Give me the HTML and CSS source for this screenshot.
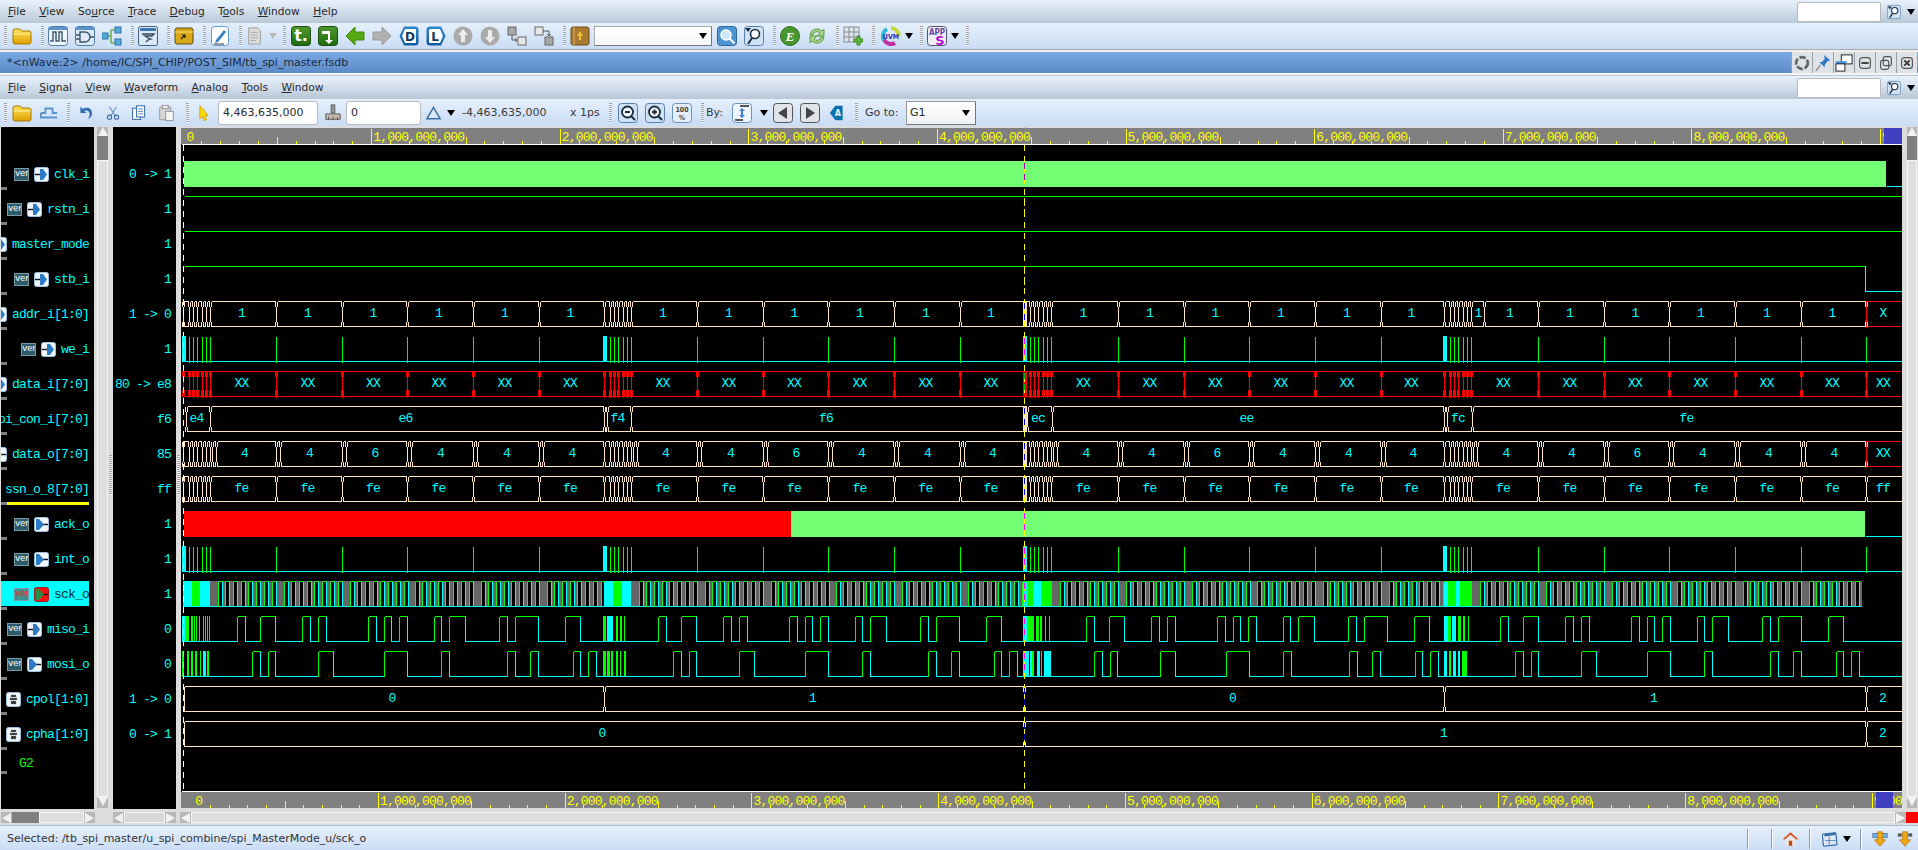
FILE: index.html
```html
<!DOCTYPE html>
<html lang="en">
<head>
<meta charset="utf-8">
<title>nWave</title>
<link rel="stylesheet" href="styles.css">
</head>
<body>
<svg class="defs" width="0" height="0">
  <defs>
    <linearGradient id="gy" x1="0" y1="0" x2="0" y2="1"><stop offset="0" stop-color="#ffe45a"/><stop offset="1" stop-color="#e0a000"/></linearGradient>
    <linearGradient id="gg" x1="0" y1="0" x2="0" y2="1"><stop offset="0" stop-color="#4f9a2c"/><stop offset="1" stop-color="#1f6a10"/></linearGradient>
    <linearGradient id="gb" x1="0" y1="0" x2="0" y2="1"><stop offset="0" stop-color="#2f86cc"/><stop offset="1" stop-color="#0e5a9e"/></linearGradient>
    <symbol id="i-folder" viewBox="0 0 20 20"><path d="M1 5q0-2 2-2h5l2 2h7q2 0 2 2v9q0 2-2 2H3q-2 0-2-2z" fill="url(#gy)" stroke="#a87800"/><path d="M1.5 8h17" stroke="#fff3a0"/></symbol>
    <symbol id="i-wave" viewBox="0 0 20 20"><rect x=".5" y=".5" width="19" height="19" rx="3" fill="#eef5fc" stroke="#4c7aa8"/><path d="M.5 2.5h19" stroke="#5b93c8" stroke-width="3"/><path d="M2 15h3V6h3v9h3V6h3v9h4" fill="none" stroke="#39566e" stroke-width="1.4"/></symbol>
    <symbol id="i-gate" viewBox="0 0 20 20"><rect x=".5" y=".5" width="19" height="19" rx="3" fill="#dfeaf6" stroke="#4c7aa8"/><path d="M.5 2.5h19" stroke="#5b93c8" stroke-width="3"/><path d="M5 6h5a4.500 4.500 0 0 1 0 10H5zM1 9h4M1 13h4M14.500 11H19" fill="none" stroke="#39566e" stroke-width="1.400"/></symbol>
    <symbol id="i-tree" viewBox="0 0 20 20"><path d="M4 10h5M9 4v13M9 4h4M9 17h4" stroke="#6ab04a" stroke-width="1.500" fill="none"/><rect x="0" y="7" width="6" height="6" fill="#58a8dc" stroke="#2a74a8"/><rect x="13" y="1" width="6" height="6" fill="#58a8dc" stroke="#2a74a8"/><rect x="13" y="13" width="6" height="6" fill="#58a8dc" stroke="#2a74a8"/></symbol>
    <symbol id="i-win" viewBox="0 0 20 20"><rect x=".5" y=".5" width="19" height="19" rx="2" fill="#dce8f4" stroke="#3f5f7e"/><rect x="2" y="2" width="16" height="3" fill="#3f78b0"/><path d="M4 8h12l-2 2H7l3 2 3 1-3 1-2 2" fill="none" stroke="#34495e" stroke-width="1.300"/></symbol>
    <symbol id="i-folder2" viewBox="0 0 20 20"><rect x="1" y="2" width="18" height="16" rx="2" fill="#d8a818" stroke="#5d4a10"/><path d="M1 6h18" stroke="#f7e488"/><path d="M7 13l4-4M8 9h3v3" stroke="#222" fill="none" stroke-width="1.200"/></symbol>
    <symbol id="i-pen" viewBox="0 0 20 20"><rect x="1.500" y=".5" width="17" height="19" rx="3" fill="#fff" stroke="#5b9bd0"/><path d="M6 14l8-10 2 2-8 10-3 1z" fill="#3a82c0"/><path d="M4 18h10" stroke="#333"/></symbol>
    <symbol id="i-doc" viewBox="0 0 20 20"><path d="M3 1h10l3 3v15H3z" fill="#dcdcdc" stroke="#9a9a9a"/><path d="M5 6h8M5 9h8M5 12h8M5 15h6" stroke="#a8a8a8"/></symbol>
    <symbol id="i-step" viewBox="0 0 20 20"><rect x=".5" y=".5" width="19" height="19" rx="3" fill="url(#gg)" stroke="#1b4f0b"/></symbol>
    <symbol id="i-left" viewBox="0 0 20 20"><path d="M1 10l9-9v5h9v8h-9v5z" fill="#58a814" stroke="#3e8a0a"/></symbol>
    <symbol id="i-right" viewBox="0 0 20 20"><path d="M19 10l-9-9v5H1v8h9v5z" fill="#b0b0b0" stroke="#9a9a9a"/></symbol>
    <symbol id="i-hexd" viewBox="0 0 20 20"><path d="M5 .5h11q3.500 0 3.500 3.500v12q0 3.500-3.500 3.500H5L.5 10z" fill="url(#gb)"/><path d="M6 3h10q1 0 1 1v12q0 1-1 1H6l-3-7z" fill="#fff"/></symbol>
    <symbol id="i-hexl" viewBox="0 0 20 20"><path d="M4 .5h11l4.500 9.500-4.500 9.500H4q-3.500 0-3.500-3.500V4Q.5.5 4 .5z" fill="url(#gb)"/><path d="M4 3h10l3 7-3 7H4q-1 0-1-1V4q0-1 1-1z" fill="#fff"/></symbol>
    <symbol id="i-up" viewBox="0 0 20 20"><circle cx="10" cy="10" r="9.500" fill="#aaa"/><path d="M10 3l5 6h-3v7H8V9H5z" fill="#eee"/></symbol>
    <symbol id="i-down" viewBox="0 0 20 20"><circle cx="10" cy="10" r="9.500" fill="#aaa"/><path d="M10 17l5-6h-3V4H8v7H5z" fill="#eee"/></symbol>
    <symbol id="i-set1" viewBox="0 0 20 20"><rect x="1" y="1" width="8" height="8" fill="#a8a8a8" stroke="#666"/><rect x="11" y="11" width="8" height="8" fill="#e8e8e8" stroke="#666"/><path d="M5 9v5h5M8 12l2 2-2 2" fill="none" stroke="#555"/></symbol>
    <symbol id="i-set2" viewBox="0 0 20 20"><rect x="1" y="1" width="8" height="8" fill="#e8e8e8" stroke="#666"/><rect x="11" y="11" width="8" height="8" fill="#a8a8a8" stroke="#666"/><path d="M9 5h6v5M13 8l2 2 2-2" fill="none" stroke="#555"/></symbol>
    <symbol id="i-book" viewBox="0 0 20 20"><rect x="1" y="1" width="18" height="18" rx="2" fill="#a87a30" stroke="#6a4a18"/><path d="M4 1v18" stroke="#d8b060"/><path d="M10 5l3 5h-2v4H9v-4H7z" fill="#f0c040"/></symbol>
    <symbol id="i-find" viewBox="0 0 20 20"><rect x=".5" y=".5" width="19" height="19" rx="3" fill="#4e94d0" stroke="#2a6aa0"/><circle cx="9" cy="9" r="5" fill="#cfe6f8" stroke="#fff" stroke-width="1.500"/><path d="M12.500 12.500l5 5" stroke="#fff" stroke-width="2"/></symbol>
    <symbol id="i-find2" viewBox="0 0 20 20"><rect x=".5" y=".5" width="19" height="19" rx="3" fill="#cfe1f4" stroke="#5680a8"/><circle cx="11" cy="8" r="4.500" fill="#fff" stroke="#1c2c3c" stroke-width="1.600"/><path d="M8 12l-4 6" stroke="#1c2c3c" stroke-width="2"/><path d="M1 2h6L4 6z" fill="#1c2c3c"/></symbol>
    <symbol id="i-circle-e" viewBox="0 0 20 20"><circle cx="10" cy="10" r="9.500" fill="#48962e" stroke="#2c7018"/></symbol>
    <symbol id="i-refresh" viewBox="0 0 20 20"><path d="M3 9a7 7 0 0 1 12-4l2-2v7h-7l3-3a4 4 0 0 0-7 2zM17 11a7 7 0 0 1-12 4l-2 2v-7h7l-3 3a4 4 0 0 0 7-2z" fill="#a6d48a" stroke="#5e9a3e"/></symbol>
    <symbol id="i-grid" viewBox="0 0 20 20"><rect x="1" y="1" width="15" height="15" fill="#dfe5ec" stroke="#858c94"/><path d="M1 6h15M1 11h15M6 1v15M11 1v15" stroke="#858c94"/><path d="M11 13h3v-3h3v3h3v3h-3v3h-3v-3h-3z" fill="#5cb43c" stroke="#3c8a20"/></symbol>
    <symbol id="i-uvm" viewBox="0 0 20 20"><circle cx="10" cy="10" r="8" fill="none" stroke="#c8d840" stroke-width="4" stroke-dasharray="12.500 50" transform="rotate(-90 10 10)"/><circle cx="10" cy="10" r="8" fill="none" stroke="#c030a0" stroke-width="4" stroke-dasharray="18 50" transform="rotate(60 10 10)"/><circle cx="10" cy="10" r="8" fill="none" stroke="#30b8d8" stroke-width="4" stroke-dasharray="12.500 50" transform="rotate(150 10 10)"/></symbol>
    <symbol id="i-apps" viewBox="0 0 20 20"><rect x=".5" y=".5" width="19" height="19" rx="3" fill="#f2eef8" stroke="#55506a"/></symbol>
    <symbol id="i-undo" viewBox="0 0 20 20"><path d="M3 2v8h8L8 7.500c3-1.500 6 0 6.500 3 .3 2.500-.5 5-2.500 7 4-1 6-4.500 5.500-8C17 4 11 1.500 6 5z" fill="#2f6fb0"/></symbol>
    <symbol id="i-cut" viewBox="0 0 20 20"><path d="M5 1l8 13M15 1L7 14" stroke="#6a8fb8" stroke-width="1.600"/><circle cx="5" cy="16" r="3" fill="none" stroke="#3c6ea8" stroke-width="1.500"/><circle cx="15" cy="16" r="3" fill="none" stroke="#3c6ea8" stroke-width="1.500"/></symbol>
    <symbol id="i-copy" viewBox="0 0 20 20"><rect x="2" y="4" width="10" height="14" fill="#fff" stroke="#3a6ea8" stroke-width="1.300"/><rect x="7" y="1" width="10" height="14" fill="#fff" stroke="#3a6ea8" stroke-width="1.300"/><path d="M9 5h6M9 8h6M9 11h6" stroke="#3a6ea8"/></symbol>
    <symbol id="i-paste" viewBox="0 0 20 20"><rect x="2" y="3" width="13" height="15" rx="1" fill="#d8d8d8" stroke="#8a8a8a"/><rect x="5" y="1" width="7" height="4" fill="#eee" stroke="#8a8a8a"/><rect x="9" y="8" width="9" height="11" fill="#f4f4f4" stroke="#8a8a8a"/></symbol>
    <symbol id="i-pointer" viewBox="0 0 12 20"><path d="M1 1l10 12H7l2 5-3 1-2-5-3 3z" fill="#ffd800" stroke="#c8a000"/></symbol>
    <symbol id="i-brush" viewBox="0 0 20 20"><rect x="8" y="1" width="4" height="9" fill="#999" stroke="#555"/><path d="M2 11h16v6H2z" fill="#c8b8a8" stroke="#555"/><path d="M5 14v4M10 14v4M15 14v4" stroke="#555"/></symbol>
    <symbol id="i-tri" viewBox="0 0 16 20"><path d="M8 4L1 16h14z" fill="#dbe8f8" stroke="#3a6ea8" stroke-width="1.600"/></symbol>
    <symbol id="i-zoomout" viewBox="0 0 20 20"><rect x=".5" y=".5" width="19" height="19" rx="3" fill="#cfe1f4" stroke="#5680a8"/><circle cx="9.500" cy="9" r="5.500" fill="#f4f8fc" stroke="#1c2c3c" stroke-width="1.800"/><path d="M7 9h5M13 13l4 4" stroke="#1c2c3c" stroke-width="2"/></symbol>
    <symbol id="i-zoomin" viewBox="0 0 20 20"><rect x=".5" y=".5" width="19" height="19" rx="3" fill="#cfe1f4" stroke="#5680a8"/><circle cx="9.500" cy="9" r="5.500" fill="#f4f8fc" stroke="#1c2c3c" stroke-width="1.800"/><path d="M7 9h5M9.500 6.500v5M13 13l4 4" stroke="#1c2c3c" stroke-width="2"/></symbol>
    <symbol id="i-box" viewBox="0 0 20 20"><rect x=".5" y=".5" width="19" height="19" rx="3" fill="#e4eefa" stroke="#6a93bc"/></symbol>
    <symbol id="i-by" viewBox="0 0 20 20"><rect x=".5" y=".5" width="19" height="19" rx="3" fill="#eef5fc" stroke="#6a93bc"/><path d="M8 3h9M3 17h8" stroke="#222" stroke-width="1.500"/><path d="M10 5l3 3h-2v4h2l-3 3-3-3h2V8H7z" fill="#3a82d8"/></symbol>
    <symbol id="i-pl" viewBox="0 0 20 20"><rect x=".5" y=".5" width="19" height="19" rx="3" fill="#e0e4e8" stroke="#555"/><path d="M14 4v12L5 10z" fill="#444"/></symbol>
    <symbol id="i-pr" viewBox="0 0 20 20"><rect x=".5" y=".5" width="19" height="19" rx="3" fill="#e0e4e8" stroke="#555"/><path d="M6 4v12l9-6z" fill="#444"/></symbol>
    <symbol id="i-tag" viewBox="0 0 20 20"><path d="M8 1h9v18H8L1 10z" fill="#0a70b0"/></symbol>
    <symbol id="i-wave2" viewBox="0 0 20 20"><path d="M1 10h5V5h8v5h5M1 10v5h18" fill="none" stroke="#5a94d0" stroke-width="2"/></symbol>
    <symbol id="i-home" viewBox="0 0 20 20"><path d="M1 10l9-8 9 8-2 1-7-6-7 6z" fill="#d85820"/><path d="M4 11l6-5 6 5v7H4z" fill="#e8e8e8"/><rect x="8" y="12" width="4" height="6" fill="#c04810"/></symbol>
    <symbol id="i-winb" viewBox="0 0 20 20"><rect x="1" y="3" width="17" height="15" rx="1" fill="#dfe9f5" stroke="#3a6ea8" stroke-width="1.500" transform="rotate(-6 10 10)"/><path d="M3 4l14-2v3L3 7z" fill="#3a6ea8"/><path d="M9 7v10M4 12h13" stroke="#3a6ea8"/></symbol>
    <symbol id="i-dn1" viewBox="0 0 20 20"><rect x="1" y="3" width="18" height="5" fill="#7ab0d8" stroke="#4c7aa0"/><path d="M7 1h6v10h4l-7 8-7-8h4z" fill="#f0a818" stroke="#b87808"/></symbol>
    <symbol id="i-dn2" viewBox="0 0 20 20"><rect x="1" y="3" width="5" height="4" fill="#555"/><rect x="14" y="3" width="5" height="4" fill="#555"/><path d="M7 1h6v10h4l-7 8-7-8h4z" fill="#f0a818" stroke="#b87808"/></symbol>
    <symbol id="i-cog" viewBox="0 0 20 20"><circle cx="10" cy="10" r="6.500" fill="none" stroke="#666" stroke-width="3" stroke-dasharray="7 2"/></symbol>
    <symbol id="i-pin" viewBox="0 0 20 20"><path d="M11 1l7 6-3 1-3 4 0 3-6-6 3 0 3-4z" fill="#2f78c8"/><path d="M7 12l-5 7" stroke="#888" stroke-width="1.300"/></symbol>
    <symbol id="i-float" viewBox="0 0 20 20"><rect x="7" y="1" width="12" height="10" fill="#fff" stroke="#111"/><path d="M1 8h12v3H1z" fill="#4a90d8"/><rect x="1" y="11" width="10" height="8" fill="#fff" stroke="#111"/></symbol>
    <symbol id="i-min" viewBox="0 0 20 20"><rect x="4" y="4" width="12" height="12" rx="3" fill="none" stroke="#555" stroke-width="1.300"/><path d="M6 10h8" stroke="#333" stroke-width="2"/></symbol>
    <symbol id="i-max" viewBox="0 0 20 20"><rect x="4" y="7" width="9" height="10" rx="2" fill="none" stroke="#555" stroke-width="1.300"/><rect x="7" y="3" width="9" height="10" rx="2" fill="none" stroke="#555" stroke-width="1.300"/></symbol>
    <symbol id="i-close" viewBox="0 0 20 20"><rect x="4" y="4" width="12" height="12" rx="3" fill="none" stroke="#555" stroke-width="1.300"/><path d="M7 7l6 6M13 7l-6 6" stroke="#333" stroke-width="2"/></symbol>
    <symbol id="p-in" viewBox="0 0 15 15"><rect x=".5" y=".5" width="14" height="14" rx="2" fill="#f0f6fc" stroke="#9cc0e0"/><path d="M1 7.500h6" stroke="#111" stroke-width="1.400"/><path d="M6 2h3l4 5.500L9 13H6z" fill="#2b7cc8"/></symbol>
    <symbol id="p-out" viewBox="0 0 15 15"><rect x=".5" y=".5" width="14" height="14" rx="2" fill="#f0f6fc" stroke="#9cc0e0"/><path d="M9 7.500h5" stroke="#111" stroke-width="1.400"/><path d="M2 2h3l5 5.500L5 13H2z" fill="#2b7cc8"/></symbol>
    <symbol id="p-sel" viewBox="0 0 15 15"><rect x=".5" y=".5" width="14" height="14" rx="2" fill="#ff1010" stroke="#a02020"/><path d="M9 7.500h5" stroke="#111" stroke-width="1.400"/><path d="M2 2h3l5 5.500L5 13H2z" fill="#2b8a48"/></symbol>
    <symbol id="p-par" viewBox="0 0 15 15"><rect x=".5" y=".5" width="14" height="14" rx="2" fill="#f0f6fc" stroke="#9cc0e0"/><path d="M5 3h5v2H5zM4 6h7v2H4zM5 9h5v3H5z" fill="#333" stroke="#888" stroke-width=".6" stroke-dasharray="1 1"/></symbol>
  </defs>
</svg>

<header class="menubar">
  <span><u>F</u>ile</span><span><u>V</u>iew</span><span>So<u>u</u>rce</span><span><u>T</u>race</span><span><u>D</u>ebug</span><span>T<u>o</u>ols</span><span><u>W</u>indow</span><span><u>H</u>elp</span>
  <span class="search"><i class="sbox"></i><svg class="mini"><use href="#i-find2"/></svg><b class="caret"></b></span>
</header>
<nav class="toolbar first">
  <i class="sep lead"></i>
  <svg class="ic"><use href="#i-folder"/></svg><i class="sep"></i>
  <svg class="ic"><use href="#i-wave"/></svg><svg class="ic"><use href="#i-gate"/></svg><svg class="ic"><use href="#i-tree"/></svg><i class="sep"></i>
  <svg class="ic"><use href="#i-win"/></svg><i class="sep"></i>
  <svg class="ic"><use href="#i-folder2"/></svg><i class="sep"></i>
  <svg class="ic"><use href="#i-pen"/></svg><i class="sep"></i>
  <svg class="ic docic"><use href="#i-doc"/></svg><b class="caret grey"></b><i class="sep"></i>
  <svg class="ic stepic" viewBox="0 0 20 20"><use href="#i-step"/><text class="ilt" x="10" y="15" text-anchor="middle">t.</text></svg>
  <svg class="ic" viewBox="0 0 20 20"><use href="#i-step"/><path d="M4 5h8v9h3l-4 4-4-4h3V8H4z" fill="#fff"/></svg>
  <svg class="ic"><use href="#i-left"/></svg><svg class="ic"><use href="#i-right"/></svg>
  <svg class="ic" viewBox="0 0 20 20"><use href="#i-hexd"/><text class="ilk" x="11" y="14.500" text-anchor="middle">D</text></svg>
  <svg class="ic" viewBox="0 0 20 20"><use href="#i-hexl"/><text class="ilk" x="9" y="14.500" text-anchor="middle">L</text></svg>
  <svg class="ic"><use href="#i-up"/></svg><svg class="ic"><use href="#i-down"/></svg><svg class="ic"><use href="#i-set1"/></svg><svg class="ic"><use href="#i-set2"/></svg><i class="sep"></i>
  <svg class="ic book"><use href="#i-book"/></svg>
  <span class="combo"><b class="caret"></b></span>
  <svg class="ic"><use href="#i-find"/></svg><svg class="ic"><use href="#i-find2"/></svg><i class="sep"></i>
  <svg class="ic" viewBox="0 0 20 20"><use href="#i-circle-e"/><text class="ile" x="10" y="15" text-anchor="middle">E</text></svg>
  <svg class="ic"><use href="#i-refresh"/></svg><i class="sep"></i>
  <svg class="ic"><use href="#i-grid"/></svg><i class="sep wide-r"></i>
  <svg class="ic nogap" viewBox="0 0 20 20"><use href="#i-uvm"/><text class="ilu" x="10" y="13" text-anchor="middle">UVM</text></svg><b class="caret after"></b><i class="sep"></i>
  <svg class="ic nogap" viewBox="0 0 20 20"><use href="#i-apps"/><text class="ila" x="10" y="9" text-anchor="middle">APP</text><text class="ils" x="13" y="19" text-anchor="middle">S</text></svg><b class="caret after"></b><i class="sep"></i>
</nav>
<div class="rule"></div>
<div class="titlebar">
  <span class="title">*&lt;nWave:2&gt; /home/IC/SPI_CHIP/POST_SIM/tb_spi_master.fsdb</span>
  <span class="winbtns">
    <span class="wb"><svg><use href="#i-cog"/></svg></span><span class="wb"><svg><use href="#i-pin"/></svg></span><span class="wb"><svg><use href="#i-float"/></svg></span><span class="wb"><svg><use href="#i-min"/></svg></span><span class="wb"><svg><use href="#i-max"/></svg></span><span class="wb"><svg><use href="#i-close"/></svg></span>
  </span>
</div>
<div class="rule light"></div>
<header class="menubar">
  <span><u>F</u>ile</span><span><u>S</u>ignal</span><span><u>V</u>iew</span><span><u>W</u>aveform</span><span><u>A</u>nalog</span><span><u>T</u>ools</span><span><u>W</u>indow</span>
  <span class="search"><i class="sbox"></i><svg class="mini"><use href="#i-find2"/></svg><b class="caret"></b></span>
</header>
<nav class="toolbar second">
  <i class="sep lead"></i>
  <svg class="ic foldic"><use href="#i-folder"/></svg><svg class="ic small"><use href="#i-wave2"/></svg><i class="sep"></i>
  <svg class="ic undo"><use href="#i-undo"/></svg><svg class="ic cut"><use href="#i-cut"/></svg><svg class="ic copy"><use href="#i-copy"/></svg><svg class="ic paste"><use href="#i-paste"/></svg><i class="sep"></i>
  <svg class="ic ptr"><use href="#i-pointer"/></svg>
  <span class="field wide">4,463,635,000</span>
  <svg class="ic brush"><use href="#i-brush"/></svg>
  <span class="field narrow">0</span>
  <svg class="tri"><use href="#i-tri"/></svg><b class="caret tricaret"></b>
  <span class="lbl delta">-4,463,635,000</span><span class="lbl unit">x 1ps</span><i class="sep"></i>
  <svg class="ic zoom1"><use href="#i-zoomout"/></svg><svg class="ic"><use href="#i-zoomin"/></svg>
  <svg class="ic" viewBox="0 0 20 20"><use href="#i-box"/><text class="ilp" x="10" y="9" text-anchor="middle">100</text><text class="ilp" x="10" y="17" text-anchor="middle">%</text></svg><i class="sep"></i>
  <span class="lbl by">By:</span>
  <svg class="ic byic"><use href="#i-by"/></svg><b class="caret bycaret"></b>
  <svg class="ic"><use href="#i-pl"/></svg><svg class="ic prev"><use href="#i-pr"/></svg>
  <svg class="ic tag" viewBox="0 0 20 20"><use href="#i-tag"/><text class="ilw" x="11" y="14" text-anchor="middle">A</text></svg><i class="sep"></i>
  <span class="lbl goto">Go to:</span>
  <span class="gocombo">G1<b class="caret"></b></span>
</nav>

<main class="panes">
  <section class="names mono">
    <div class="row"><span class="ver">ver</span><svg class="port"><use href="#p-in"/></svg><span>clk_i</span></div>
    <div class="row"><span class="ver">ver</span><svg class="port"><use href="#p-in"/></svg><span>rstn_i</span></div>
    <div class="row"><span class="ver">ver</span><svg class="port"><use href="#p-in"/></svg><span>master_mode</span></div>
    <div class="row"><span class="ver">ver</span><svg class="port"><use href="#p-in"/></svg><span>stb_i</span></div>
    <div class="row"><span class="ver">ver</span><svg class="port"><use href="#p-in"/></svg><span>addr_i[1:0]</span></div>
    <div class="row"><span class="ver">ver</span><svg class="port"><use href="#p-in"/></svg><span>we_i</span></div>
    <div class="row"><span class="ver">ver</span><svg class="port"><use href="#p-in"/></svg><span>data_i[7:0]</span></div>
    <div class="row"><span class="ver">ver</span><svg class="port"><use href="#p-in"/></svg><span>spi_con_i[7:0]</span></div>
    <div class="row"><span class="ver">ver</span><svg class="port"><use href="#p-out"/></svg><span>data_o[7:0]</span></div>
    <div class="row group-end"><span class="ver">ver</span><svg class="port"><use href="#p-out"/></svg><span>ssn_o_8[7:0]</span></div>
    <div class="row"><span class="ver">ver</span><svg class="port"><use href="#p-out"/></svg><span>ack_o</span></div>
    <div class="row"><span class="ver">ver</span><svg class="port"><use href="#p-out"/></svg><span>int_o</span></div>
    <div class="row selected"><span class="ver">ver</span><svg class="port"><use href="#p-sel"/></svg><span>sck_o</span></div>
    <div class="row"><span class="ver">ver</span><svg class="port"><use href="#p-in"/></svg><span>miso_i</span></div>
    <div class="row"><span class="ver">ver</span><svg class="port"><use href="#p-out"/></svg><span>mosi_o</span></div>
    <div class="row"><span class="ver">ver</span><svg class="port"><use href="#p-par"/></svg><span>cpol[1:0]</span></div>
    <div class="row"><span class="ver">ver</span><svg class="port"><use href="#p-par"/></svg><span>cpha[1:0]</span></div>
    <div class="row group"><span class="g2">G2</span></div>
  </section>
  <div class="vbar left"><b class="arrow up"></b><i class="trough"></i><i class="thumb"></i><b class="arrow down"></b></div>
  <i class="grip"></i>
  <section class="values mono">
    <div class="row">0 -&gt; 1</div><div class="row">1</div><div class="row">1</div><div class="row">1</div>
    <div class="row">1 -&gt; 0</div><div class="row">1</div><div class="row">80 -&gt; e8</div><div class="row">f6</div>
    <div class="row">85</div><div class="row">ff</div><div class="row">1</div><div class="row">1</div>
    <div class="row">1</div><div class="row">0</div><div class="row">0</div><div class="row">1 -&gt; 0</div>
    <div class="row">0 -&gt; 1</div>
  </section>
  <i class="grip"></i>
  <svg id="wave" class="wave" width="1721" height="682" viewBox="181 127 1721 682" shape-rendering="crispEdges"></svg>
  <div class="vbar right"><b class="arrow up"></b><i class="trough"></i><i class="thumb"></i><b class="arrow down"></b></div>
</main>

<div class="hbars">
  <div class="hbar h1"><b class="arrow lf"></b><i class="trough"></i><i class="thumb"></i><b class="arrow rt"></b></div>
  <div class="hbar h2"><b class="arrow lf"></b><i class="thumb"></i><b class="arrow rt"></b></div>
  <div class="hbar h3"><b class="arrow lf"></b><i class="thumb"></i><b class="arrow rt"></b></div>
  <i class="redsq"></i>
</div>

<footer class="status">
  <span class="msg">Selected: /tb_spi_master/u_spi_combine/spi_MasterMode_u/sck_o</span>
  <i class="vsep s1"></i><i class="vsep s2"></i>
  <svg class="ic home"><use href="#i-home"/></svg>
  <i class="vsep s3"></i>
  <svg class="ic winb"><use href="#i-winb"/></svg><b class="caret"></b>
  <i class="vsep s4"></i>
  <svg class="ic dn1"><use href="#i-dn1"/></svg><svg class="ic dn2"><use href="#i-dn2"/></svg>
</footer>
<script src="wave.js"></script>
</body>
</html>
```
FILE: styles.css
```css
html, body { margin: 0; padding: 0; }
body {
  width: 1918px; height: 850px; overflow: hidden; background: #dcdcdc;
  font-family: "DejaVu Sans", sans-serif; font-size: 10.67px; color: #2a2a2a;
}
.defs { position: absolute; }
i, b { display: block; font-style: normal; }
svg { display: block; flex: none; }
.menubar {
  height: 23px; display: flex; align-items: center; gap: 13.400px; padding-left: 8px; box-sizing: border-box;
  background: linear-gradient(#e8f1fc, #dce7f3 30%, #b8c6d6);
}
.menubar .search { margin-left: auto; display: flex; align-items: center; padding-right: 3px; }
.sbox { width: 82px; height: 18px; background: #fff; border: 1px solid #b8b8b8; border-radius: 2px; margin-right: 6px; }
.mini { width: 14px; height: 16px; margin-right: 6px; }
.caret { width: 0; height: 0; border: 4.500px solid transparent; border-top: 6px solid #000; border-bottom: 0; flex: none; }
.caret.grey { border-top-color: #b8b8b8; margin-right: 4px; }
.caret.after { margin-right: 5px; }
.toolbar {
  display: flex; align-items: center; padding-left: 4px;
  background: linear-gradient(#e6f0fc, #c9dcf5);
}
.toolbar.first { height: 26px; }
.toolbar.second { height: 27px; }
.ic { width: 20px; height: 20px; margin-right: 7px; }
.ic.nogap { margin-right: 4px; }
.docic { width: 18px; margin-right: 5px; }
.stepic { margin-left: 1px; }
.sep {
  width: 3px; height: 20px; margin: 0 4px 0 2px; flex: none;
  background: repeating-linear-gradient(#9aa2aa 0 1px, #f4f8fd 1px 2px);
}
.sep.lead { margin: 0 5px 0 0; }
.sep.wide-r { margin-right: 6px; }
.book { margin-right: 4px; }
.combo {
  width: 118px; height: 20px; background: linear-gradient(#fff, #f4f6f8); border: 1px solid #aaa; border-right-color: #777; border-bottom-color: #777;
  box-sizing: border-box; display: flex; align-items: center; justify-content: flex-end; padding-right: 4px; margin-right: 5px;
}
.rule { height: 3px; background: linear-gradient(#a8a8a8 33%, #f0f0f0 33%); }
.rule.light { background: linear-gradient(#f4f4f4 66%, #b8c4d0 66%); }
.titlebar {
  height: 21px; display: flex; align-items: center; justify-content: space-between; padding-left: 7px;
  background: linear-gradient(#7ba9e4, #5b8ac6); color: #1a2a40; font-size: 11px;
}
.winbtns { display: flex; padding-right: 1px; }
.wb { width: 21px; height: 21px; background: #dfe2e6; border-left: 1px solid #9a9fa6; box-sizing: border-box; display: flex; align-items: center; justify-content: center; }
.wb svg { width: 18px; height: 18px; }
.foldic { margin-right: 8px; }
.small { width: 18px; }
.undo { width: 16px; margin-left: 4px; margin-right: 12px; }
.cut { width: 14px; margin-right: 11px; }
.copy { width: 16px; margin-right: 11px; }
.paste { width: 17px; margin-right: 9px; }
.ptr { width: 10px; margin: 0 9px 0 6px; }
.field {
  box-sizing: border-box; height: 24px; background: #fff; border: 1px solid #bbb; border-radius: 3px;
  display: flex; align-items: center; padding-left: 4px; font-size: 11px;
}
.field.wide { width: 100px; margin-right: 6px; }
.field.narrow { width: 75px; margin-right: 5px; }
.brush { width: 18px; margin-right: 4px; }
.tri { width: 15px; height: 20px; margin-right: 6px; }
.tricaret { margin-right: 7px; }
.lbl { flex: none; color: #3a3a3a; font-size: 11px; }
.delta { width: 86px; margin-right: 22px; }
.unit { width: 30px; margin-right: 7px; }
.zoom1 { margin-left: 2px; }
.by { width: 17px; margin-right: 9px; margin-left: -2px; }
.byic { margin-right: 8px; }
.bycaret { margin-right: 5px; }
.prev { margin-right: 9px; }
.tag { width: 16px; margin-right: 8px; }
.goto { width: 34px; margin-left: 3px; margin-right: 7px; }
.gocombo {
  box-sizing: border-box; width: 70px; height: 24px; background: linear-gradient(#fff, #eef1f4); border: 1px solid #999; border-right-color: #777; border-bottom-color: #777;
  display: flex; align-items: center; justify-content: space-between; padding: 0 5px 0 3px; font-size: 11px;
}
.ilt { font: bold 16px "DejaVu Sans", sans-serif; fill: #fff; }
.ilk { font: bold 12px "DejaVu Sans", sans-serif; fill: #113a5c; }
.ile { font: italic bold 13px "Liberation Serif", serif; fill: #fff; }
.ilu { font: bold 7px "DejaVu Sans Condensed", "DejaVu Sans", sans-serif; fill: #3a2aa8; }
.ila { font: bold 8px "DejaVu Sans Condensed", "DejaVu Sans", sans-serif; fill: #5a4aa0; }
.ils { font: bold 13px "DejaVu Sans", sans-serif; fill: #b010c8; }
.ilp { font: bold 7px "DejaVu Sans Condensed", "DejaVu Sans", sans-serif; fill: #444; }
.ilw { font: bold 10px "DejaVu Sans", sans-serif; fill: #e8f4ff; }

.panes { display: flex; height: 682px; margin-top: 1px; }
.mono { font-family: "Liberation Mono", monospace; font-size: 13px; letter-spacing: -0.800px; color: #00ffff; }
.names { width: 93px; margin-left: 1px; padding-top: 28px; height: 654px; background: #000; overflow: hidden; }
.values { width: 63px; padding-top: 28px; background: #000; height: 654px; overflow: hidden; }
.row { height: 35px; box-sizing: border-box; padding-top: 3px; display: flex; align-items: center; justify-content: flex-end; white-space: nowrap; }
.names .row { gap: 5px; padding-right: 5px; background: linear-gradient(#808080, #808080) 0 100% / 6px 3px no-repeat; }
.values .row { padding-right: 5px; }
.names .row.group-end { background: linear-gradient(#808080, #808080) 0 100% / 6px 3px no-repeat, linear-gradient(#ffff00, #ffff00) 0 100% / 88px 3px no-repeat; }
.names .row.selected { color: #062a2a; background: linear-gradient(#808080, #808080) 0 100% / 6px 3px no-repeat, linear-gradient(#00ffff, #00ffff) 0 6px / 88px 25px no-repeat; }
.names .row.group { height: 24px; justify-content: flex-start; padding-left: 18px; }
.g2 { color: #00ff00; }
.ver {
  flex: none; width: 15px; height: 13px; background: #2e5b69; color: #fff; border: 1px solid #7a9aa6; box-sizing: border-box;
  font: 9px/11px "Liberation Mono", monospace; letter-spacing: -0.500px; text-align: center; overflow: hidden;
}
.selected .ver { background: #3f8f90; color: #ff2020; }
.port { width: 15px; height: 15px; }

.vbar { width: 11px; height: 681px; display: flex; flex-direction: column; background: #dcdcdc; }
.vbar.left { margin-left: 3px; }
.vbar.right { margin-left: 5px; width: 10px; }
.vbar .arrow { height: 9px; display: flex; justify-content: center; flex: none; }
.vbar .trough { height: 24px; background: #808080; flex: none; }
.vbar .thumb { flex: 1; background: #dedede; border: 1px solid #f4f4f4; box-sizing: border-box; }
.arrow.up::before { content: ""; border: 5px solid transparent; border-bottom: 9px solid #f2f2f2; border-top: 0; }
.arrow.down::before { content: ""; border: 5px solid transparent; border-top: 9px solid #f2f2f2; border-bottom: 0; }
.vbar .down { background: #b8b8b8; height: 11px; }
.vbar .up { background: #b8b8b8; }
.grip {
  width: 5px; flex: none; height: 681px;
  background: repeating-linear-gradient(#a0a0a0 0 1px, #f2f2f2 1px 2px) center 328px / 3px 40px no-repeat, #dcdcdc;
}
.wave { background: #000; }

.hbars { display: flex; height: 11px; margin-top: 3px; }
.hbar { display: flex; height: 11px; }
.hbar .arrow { width: 11px; flex: none; background: #b8b8b8; display: flex; align-items: center; justify-content: center; }
.hbar .trough { background: #808080; flex: none; width: 27px; }
.hbar .thumb { flex: 1; background: #dedede; border: 1px solid #f4f4f4; box-sizing: border-box; }
.arrow.lf::before { content: ""; border: 5px solid transparent; border-right: 9px solid #f2f2f2; border-left: 0; }
.arrow.rt::before { content: ""; border: 5px solid transparent; border-left: 9px solid #f2f2f2; border-right: 0; }
.h1 { width: 94px; margin-left: 1px; }
.h2 { width: 63px; margin-left: 18px; }
.h3 { width: 1726px; margin-left: 4px; }
.h2 .thumb { background: #d8d8d8; }
.redsq { width: 12px; height: 11px; background: #ff0000; margin-left: auto; }

.status {
  height: 26px; margin-top: 2px; display: flex; align-items: center; padding-left: 7px; border-top: 1px solid #a8c0de; box-sizing: border-box;
  background: linear-gradient(#e6f0fc, #c9dcf5); font-size: 11px;
}
.msg { width: 1740px; flex: none; color: #333; }
.vsep { width: 1px; height: 20px; background: #8a98a6; box-shadow: 1px 0 0 #fff; flex: none; }
.s2 { margin-left: 23px; }
.home { margin-left: 10px; margin-right: 10px; width: 17px; }
.winb { margin-left: 12px; margin-right: 5px; width: 16px; }
.s4 { margin-left: 9px; }
.dn1 { margin-left: 11px; margin-right: 9px; width: 16px; }
.dn2 { margin-right: 0; width: 16px; }
```
FILE: wave.js
```js
(function () {
  var BISQUE = '#ffe4c4', GREEN = '#00ff00', CYAN = '#00ffff', RED = '#ff0000', SOLID = '#73ff73';
  var rects = [], paths = {}, texts = [], top = [];
  function R(c, x, y, w, h) { rects.push('<rect x="' + x + '" y="' + y + '" width="' + w + '" height="' + h + '" fill="' + c + '"/>'); }
  function L(c, x1, y1, x2, y2) {
    x1 = Math.round(x1); x2 = Math.round(x2);
    paths[c] = (paths[c] || '') + 'M' + (x1 + .5) + ' ' + (y1 + .5) + 'L' + (x2 + .5) + ' ' + (y2 + .5);
  }
  function T(x, y, s, cls) { texts.push('<text x="' + x + '" y="' + y + '" class="' + cls + '">' + s + '</text>'); }
  function rowTop(i) { return 161 + 35 * i; }

  var starts = [183, 604, 1024, 1444], ends = [210, 631, 1052, 1472];
  var burst = [0, 6, 10, 14, 19, 23, 27];
  function bounds(k) {
    var a = [], j;
    for (j = 1; j <= 5; j++) a.push(Math.round(ends[k] + 65.8 * j));
    return a;
  }

  function trans(c, x, t) {
    L(c, x - 1, t, x - 1, t + 5); L(c, x + 1, t, x + 1, t + 5);
    L(c, x, t + 5, x, t + 20);
    L(c, x - 1, t + 20, x - 1, t + 25); L(c, x + 1, t + 20, x + 1, t + 25);
  }
  function redTrans(x, t) {
    R(RED, x - 1, t, 3, 6); R(RED, x - 1, t + 19, 3, 7);
    L(RED, x, t, x, t + 26);
  }
  function box(c, a, b, t) { L(c, a + 1, t, b - 1, t); L(c, a + 1, t + 25, b - 1, t + 25); }
  function label(a, b, t, s) { T((a + b) / 2 - 1.5, t + 16, s, 'v'); }

  /* generic bus row */
  function bus(i, opt) {
    var t = rowTop(i), all = [], k, prev;
    for (k = 0; k < 4; k++) {
      burst.forEach(function (o) { all.push({ x: starts[k] + o }); });
      if (opt.dbl) { all.push({ x: starts[k] + 29 }); all.push({ x: starts[k] + 33 }); }
      if (opt.extra && opt.extra[k]) all.push({ x: opt.extra[k] });
      bounds(k).forEach(function (b) {
        all.push({ x: b });
        if (opt.dbl) all.push({ x: b + 4 });
      });
    }
    all.push({ x: 1866 });
    all.sort(function (a, b) { return a.x - b.x; });
    prev = 183;
    var c = opt.red ? RED : BISQUE;
    all.forEach(function (p) {
      box(c, prev, p.x, t);
      if (p.x - prev > 30) label(prev, p.x, t, opt.text(p.x));
      if (opt.red) redTrans(p.x, t); else trans(c, p.x, t);
      prev = p.x;
    });
    var lastC = opt.lastRed ? RED : c;
    box(lastC, 1866, 1904, t);
    if (opt.lastRed) redTrans(1866, t);
    T(1883, t + 16, opt.last, 'v');
    R(opt.red ? RED : BISQUE, 1023, t, 4, 26);
    if (opt.extra) T(1478, t + 16, '1', 'v');
  }
  function dataLabel(x) {
    /* third segment in every group holds 6 */
    var gs = [210, 631, 1052, 1472], r = '4';
    gs.forEach(function (g) { if (x > g + 65.8 * 2 + 10 && x < g + 65.8 * 3 + 10) r = '6'; });
    return r;
  }

  /* clk */
  var t = rowTop(0);
  R(SOLID, 184, t, 1702, 26);
  L(CYAN, 1886, t + 25, 1902, t + 25);
  /* constants */
  L(GREEN, 184, rowTop(1), 1902, rowTop(1));
  L(GREEN, 184, rowTop(2), 1902, rowTop(2));
  t = rowTop(3);
  L(GREEN, 184, t, 1865, t); L(CYAN, 1865, t, 1865, t + 25); L(CYAN, 1865, t + 25, 1902, t + 25);

  bus(4, { text: function () { return '1'; }, last: 'X', lastRed: true, extra: [0, 0, 0, 1484] });
  /* we_i / int_o pulses */
  [5, 11].forEach(function (i) {
    var t = rowTop(i), k;
    L(CYAN, 183, t + 25, 1902, t + 25);
    for (k = 0; k < 4; k++) {
      R(CYAN, starts[k] - 1, t, 4, 26);
      burst.slice(1).forEach(function (o) { L(GREEN, starts[k] + o, t, starts[k] + o, t + 26); });
      bounds(k).forEach(function (b) { L(GREEN, b, t, b, t + 26); });
    }
    L(GREEN, 1866, t, 1866, t + 26);
  });
  bus(6, { red: true, text: function () { return 'XX'; }, last: 'XX', lastRed: true });

  /* spi_con */
  t = rowTop(7);
  var con = [[186, 210, 'e4'], [210, 604, 'e6'], [607, 631, 'f4'], [631, 1024, 'f6'], [1027, 1052, 'ec'], [1052, 1444, 'ee'], [1447, 1472, 'fc'], [1472, 1904, 'fe']];
  con.forEach(function (c) {
    box(BISQUE, c[0], c[1], t); trans(BISQUE, c[0], t); label(c[0], c[1], t, c[2]);
  });
  [604, 1024, 1444].forEach(function (x) { trans(BISQUE, x, t); });
  R(BISQUE, 1023, t, 4, 26);

  bus(8, { dbl: true, text: dataLabel, last: 'XX', lastRed: true });
  bus(9, { text: function () { return 'fe'; }, last: 'ff' });

  /* ack */
  t = rowTop(10);
  R(RED, 184, t, 607, 26); R(SOLID, 791, t, 1074, 26);
  L(CYAN, 1865, t + 25, 1902, t + 25);

  /* sck */
  t = rowTop(12);
  R('#666666', 183, t, 1679, 26);
  L(CYAN, 183, t + 25, 1861, t + 25);
  var pulses = [8, 15, 23, 31, 38, 46, 54, 62];
  function sckPulse(x) {
    R('#000000', x + 1, t + 1, 3, 24);
    L(GREEN, x, t, x, t + 25); L(GREEN, x, t, x + 4, t);
    L(CYAN, x + 4, t, x + 4, t + 25);
  }
  var k, j;
  for (k = 0; k < 4; k++) {
    for (j = 0; j < 6; j++) {
      var s = ends[k] + 65.8 * j;
      pulses.forEach(function (p) {
        var x = Math.round(s + p);
        if (x < 1856) sckPulse(x);
      });
    }
  }
  function burstFill(i, list) {
    var tt = rowTop(i);
    list.forEach(function (b) { R(b[0], b[1], tt, b[2], 26); });
  }
  burstFill(12, [
    [CYAN, 183, 9], [GREEN, 192, 8], [CYAN, 200, 10],
    [CYAN, 604, 9], [GREEN, 613, 9], [CYAN, 622, 9],
    [CYAN, 1023, 2], [GREEN, 1025, 8], [CYAN, 1033, 8], [GREEN, 1041, 11],
    [CYAN, 1444, 4], [GREEN, 1448, 8], [CYAN, 1456, 4], [GREEN, 1460, 12]
  ]);

  /* miso / mosi */
  var misoP = [[237, 245], [260, 275], [302, 310], [318, 326], [368, 376], [384, 391], [399, 407], [434, 441], [449, 465], [499, 507], [515, 538], [565, 580]];
  var mosiP = [[252, 260], [268, 275], [318, 333], [384, 407], [441, 449], [507, 515], [530, 538], [573, 580], [588, 596]];
  function digital(i, list, shifts) {
    var t = rowTop(i), prev = 183;
    shifts.forEach(function (sh) {
      list.forEach(function (p) {
        var a = p[0] + sh, b = p[1] + sh;
        if (b > 1862) return;
        L(CYAN, prev, t + 25, a, t + 25);
        L(GREEN, a, t, a, t + 25); L(GREEN, a, t, b, t);
        L(CYAN, b, t, b, t + 25);
        prev = b;
      });
    });
    L(CYAN, prev, t + 25, 1902, t + 25);
  }
  digital(13, misoP, [0, 421, 849, 1263]);
  digital(14, mosiP, [0, 421, 842, 1263]);
  burstFill(13, [
    [CYAN, 182, 3], [GREEN, 185, 4], [GREEN, 191, 2], [GREEN, 194, 1], [GREEN, 196, 1], [GREEN, 199, 1], [GREEN, 203, 1], [GREEN, 205, 1], [GREEN, 207, 1], [GREEN, 209, 1],
    [GREEN, 603, 3], [CYAN, 607, 6], [GREEN, 616, 2], [GREEN, 620, 2], [GREEN, 624, 1],
    [CYAN, 1023, 4], [GREEN, 1027, 7], [GREEN, 1036, 3], [GREEN, 1040, 2], [GREEN, 1045, 1], [GREEN, 1049, 1],
    [CYAN, 1444, 4], [GREEN, 1448, 3], [CYAN, 1452, 4], [GREEN, 1458, 3], [GREEN, 1463, 2], [GREEN, 1468, 1]
  ]);
  burstFill(14, [
    [GREEN, 182, 2], [GREEN, 187, 2], [GREEN, 191, 2], [GREEN, 195, 2], [GREEN, 200, 1], [CYAN, 203, 3], [GREEN, 207, 2],
    [GREEN, 603, 3], [GREEN, 607, 3], [GREEN, 611, 2], [GREEN, 616, 2], [GREEN, 620, 1], [GREEN, 624, 2],
    [CYAN, 1023, 6], [CYAN, 1030, 2], [GREEN, 1032, 2], [CYAN, 1037, 3], [GREEN, 1041, 1], [CYAN, 1044, 7],
    [CYAN, 1444, 3], [GREEN, 1449, 2], [CYAN, 1453, 3], [CYAN, 1458, 2], [GREEN, 1462, 5]
  ]);

  /* cpol / cpha */
  function param(i, segs) {
    var t = rowTop(i);
    segs.forEach(function (s, n) {
      box(BISQUE, s[0], s[1], t);
      if (n) trans(BISQUE, s[0], t);
      T((s[0] + s[1]) / 2 - 1.5 - (s[3] || 0), t + 16, s[2], 'v');
    });
    L(BISQUE, 184, t, 184, t + 25);
  }
  param(15, [[183, 604, '0'], [604, 1024, '1'], [1024, 1444, '0'], [1444, 1866, '1'], [1866, 1904, '2', 1]]);
  param(16, [[183, 1024, '0'], [1024, 1866, '1'], [1866, 1904, '2', 1]]);

  /* rulers */
  function ruler(yTop, yBot, x0, step, blue) {
    R('#808080', 181, yTop, 1721, yBot - yTop);
    for (var n = 1; n < 100; n++) {
      var x = x0 + step * n / 10;
      if (x > 1902) break;
      var h = n % 10 === 0 ? yBot - yTop : n % 5 === 0 ? 8 : 4;
      L('#ffff00', x, yBot - h, x, yBot - 1);
    }
    var names = ['0', '1,000,000,000', '2,000,000,000', '3,000,000,000', '4,000,000,000', '5,000,000,000', '6,000,000,000', '7,000,000,000', '8,000,000,000', '9,000,000,000'];
    names.forEach(function (s, n) { T(x0 + step * n + 2 + (n ? 0 : 2), yTop + 13, s, 'r'); });
    top.push('<rect x="' + blue[0] + '" y="' + yTop + '" width="' + blue[1] + '" height="' + (yBot - yTop) + '" fill="#3f3fbf"/>');
  }
  ruler(128, 144, 182.6, 188.6, [1884, 18]);
  ruler(792, 808, 191.2, 186.75, [1876, 17]);
  R('#ffffff', 182, 144, 1720, 1);
  R('#dcdcdc', 181, 127, 1721, 1);
  R('#ffffff', 182, 791, 1720, 1);
  R('#dcdcdc', 181, 808, 1721, 1);
  top.push('<rect x="1025" y="127" width="1" height="6" fill="#00ff00"/>');

  /* cursors */
  var overlay = '';
  function dashes(x, c) {
    overlay += '<line x1="' + (x + .5) + '" y1="145" x2="' + (x + .5) + '" y2="791" stroke="' + c + '" stroke-dasharray="6 5"/>';
  }
  dashes(183, '#ffffff');
  dashes(1024, '#ffff00');
  var rowC = ['#aa00aa', '#ffff00', '#ffff00', '#ffff00', '#0000e0', '#ff00ff', '#00c000', '#0000e0', '#0000e0', '#0000e0', '#ff00ff', '#ff00ff', '#ff00ff', '#ff00ff', '#ff00ff', '#0000a0', '#0000a0'];
  rowC.forEach(function (c, i) {
    var y = rowTop(i);
    overlay += '<line x1="1024.5" y1="' + (y + 2) + '" x2="1024.5" y2="' + (y + 24) + '" stroke="' + c + '" stroke-dasharray="6 5"/>';
  });

  var body = rects.join('');
  Object.keys(paths).forEach(function (c) { body += '<path d="' + paths[c] + '" stroke="' + c + '" fill="none"/>'; });
  body += texts.join('') + top.join('') + overlay;
  document.getElementById('wave').innerHTML = '<style>.v{font:13px "Liberation Mono",monospace;letter-spacing:-.8px;fill:#0ff;text-anchor:middle}.r{font:13px "Liberation Mono",monospace;letter-spacing:-.8px;fill:#ff0}</style>' + body;
})();
```
